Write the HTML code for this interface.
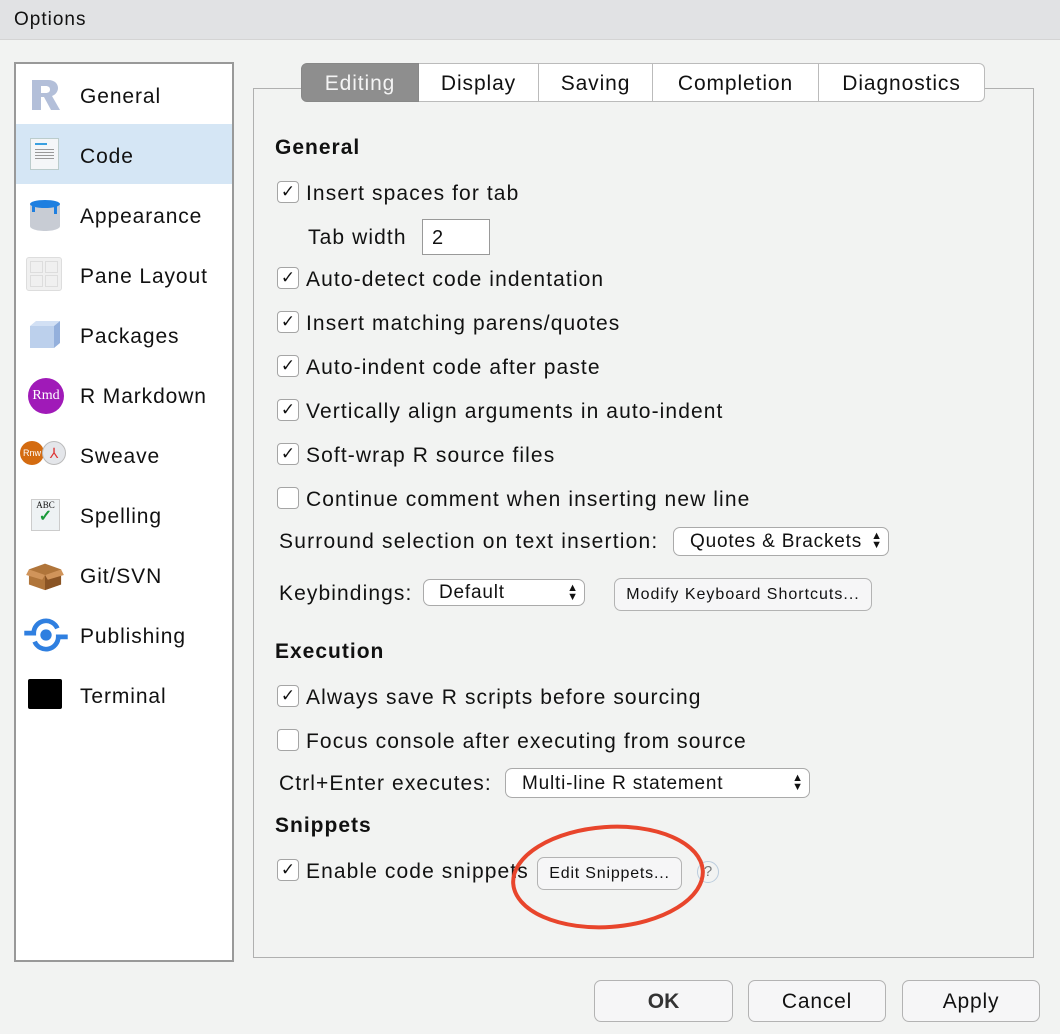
<!DOCTYPE html>
<html><head><meta charset="utf-8"><style>
*{box-sizing:border-box;margin:0;padding:0}
body{width:1060px;height:1034px;background:#f2f3f2;font-family:"Liberation Sans",sans-serif;color:#111;position:relative;overflow:hidden}
.a{position:absolute;white-space:nowrap}
.t{font-size:21px;line-height:24px;letter-spacing:1.1px;margin-top:2px}
.cb{position:absolute;width:22px;height:22px;border:1.5px solid #a5a5a5;border-radius:4px;background:#fff;font-size:17px;line-height:19px;text-align:center;color:#111;letter-spacing:0}
.nav{position:absolute;left:0;width:216px;height:60px}
.nav span{position:absolute;left:64px;top:21px;font-size:21px;line-height:24px;letter-spacing:0.9px}
.ic{position:absolute;left:12px;top:14px;width:34px;height:34px}
.tab{position:absolute;top:63px;height:39px;background:#fff;border:1.5px solid #bbb;border-left:none;font-size:21px;line-height:40px;text-align:center;letter-spacing:0.9px}
.sel{border:1.5px solid #aaa;border-radius:7px;background:#fff;font-size:19px;line-height:26px;position:absolute;letter-spacing:0.8px}
.btn{position:absolute;border:1.5px solid #b3b3b3;border-radius:7px;background:#f6f6f7;text-align:center}
.arr{position:absolute;right:6px;top:4px;font-size:11px;line-height:9px;letter-spacing:0}
</style></head><body>
<div class="a" style="left:0;top:0;width:1060px;height:40px;background:#e1e2e4;border-bottom:1px solid #d4d4d4"></div>
<div class="a" style="left:14px;top:9px;font-size:19px;letter-spacing:1px">Options</div>

<div class="a" style="left:14px;top:62px;width:220px;height:900px;background:#fff;border:2px solid #999">
 <div class="nav" style="top:0"><svg class="ic" viewBox="0 0 34 34"><path d="M4 2h16c7 0 10 4 10 8s-3 7-6 8l8 14h-9l-7-13h-3v13H4z M13 8v7h5c2 0 4-1 4-3.5S20 8 18 8z" fill="#b3bfd9" fill-rule="evenodd"/></svg><span>General</span></div>
 <div class="nav" style="top:60px;background:#d5e6f5"><div class="ic" style="left:14px;width:29px;height:32px;background:#f4f6f8;border:1px solid #bcc"><div style="margin:4px 4px;height:2px;width:12px;background:#3aa0e0"></div><div style="margin:2px 4px;height:12px;background:repeating-linear-gradient(#999 0 1px,transparent 1px 3px)"></div></div><span>Code</span></div>
 <div class="nav" style="top:120px"><svg class="ic" viewBox="0 0 34 34"><path d="M2 6v22c0 3 7 5 15 5s15-2 15-5V6z" fill="#c8ccd4"/><ellipse cx="17" cy="6" rx="15" ry="4" fill="#1e7fe0"/><path d="M4 8v6h3v-5zM26 8v8h3V8z" fill="#1e7fe0"/></svg><span>Appearance</span></div>
 <div class="nav" style="top:180px"><div class="ic" style="left:10px;top:13px;width:36px;height:34px;background:#f0f0f0;border:1px solid #ddd;border-radius:3px;display:grid;grid-template-columns:1fr 1fr;gap:2px;padding:3px"><i style="border:1px solid #ddd"></i><i style="border:1px solid #ddd"></i><i style="border:1px solid #ddd"></i><i style="border:1px solid #ddd"></i></div><span>Pane Layout</span></div>
 <div class="nav" style="top:240px"><svg class="ic" viewBox="0 0 34 34"><path d="M2 8h24v22H2z" fill="#bcd0ec"/><path d="M2 8l6-5h24l-6 5z" fill="#d2e0f4"/><path d="M26 8l6-5v22l-6 5z" fill="#94b0dc"/></svg><span>Packages</span></div>
 <div class="nav" style="top:300px"><div class="ic" style="left:12px;width:36px;height:36px;border-radius:50%;background:#a01ab8;color:#fff;font:14px 'Liberation Serif',serif;line-height:36px;text-align:center">Rmd</div><span>R Markdown</span></div>
 <div class="nav" style="top:360px"><div class="ic" style="left:4px;top:17px;width:24px;height:24px;border-radius:50%;background:#d46b10;color:#fff;font-size:9px;line-height:24px;text-align:center">Rnw</div><div class="ic" style="left:26px;top:17px;width:24px;height:24px;border-radius:50%;background:#e4e6ea;border:1px solid #bbb;color:#d33;font-size:14px;line-height:22px;text-align:center">⅄</div><span>Sweave</span></div>
 <div class="nav" style="top:420px"><div class="ic" style="left:15px;top:15px;width:29px;height:32px;background:#eef2f4;border:1px solid #ccc;font:9px 'Liberation Serif',serif;text-align:center;line-height:11px">ABC<br><b style="color:#1a9a3a;font-size:16px">✓</b></div><span>Spelling</span></div>
 <div class="nav" style="top:480px"><svg class="ic" viewBox="0 0 42 36" style="left:8px;width:42px"><path d="M4 12l17-6 17 6v16l-17 6-17-6z" fill="#b0753a"/><path d="M21 18v16l17-6V12z" fill="#8a5424"/><path d="M4 12l-3 6 17 5 3-5zM38 12l3 6-17 5-3-5z" fill="#d0945a"/></svg><span>Git/SVN</span></div>
 <div class="nav" style="top:540px"><svg class="ic" viewBox="0 0 48 36" style="left:6px;width:48px"><circle cx="24" cy="18" r="6" fill="#2f7fe0"/><path d="M1 16h10a13 13 0 0 1 25-5M47 20H37a13 13 0 0 1-25 5" fill="none" stroke="#2f7fe0" stroke-width="5"/></svg><span>Publishing</span></div>
 <div class="nav" style="top:600px"><div class="ic" style="left:12px;top:15px;width:34px;height:30px;background:#000;border-radius:2px"></div><span>Terminal</span></div>
</div>

<div class="a" style="left:253px;top:88px;width:781px;height:870px;border:1.5px solid #b0b0b0"></div>
<div class="tab" style="left:301px;width:118px;background:#8e8e8e;color:#f4f4f4;border:1.5px solid #888;border-radius:6px 0 0 6px">Editing</div>
<div class="tab" style="left:419px;width:120px">Display</div>
<div class="tab" style="left:539px;width:114px">Saving</div>
<div class="tab" style="left:653px;width:166px">Completion</div>
<div class="tab" style="left:819px;width:166px;border-radius:0 6px 6px 0">Diagnostics</div>

<div class="a t" style="left:275px;top:134px;font-weight:bold;letter-spacing:1px">General</div>
<div class="cb" style="left:277px;top:181px">✓</div><div class="a t" style="left:306px;top:180px">Insert spaces for tab</div>
<div class="a t" style="left:308px;top:224px">Tab width</div>
<div class="a" style="left:422px;top:219px;width:68px;height:36px;background:#fff;border:1.5px solid #999;font-size:20px;padding:7px 9px">2</div>
<div class="cb" style="left:277px;top:267px">✓</div><div class="a t" style="left:306px;top:266px">Auto-detect code indentation</div>
<div class="cb" style="left:277px;top:311px">✓</div><div class="a t" style="left:306px;top:310px">Insert matching parens/quotes</div>
<div class="cb" style="left:277px;top:355px">✓</div><div class="a t" style="left:306px;top:354px">Auto-indent code after paste</div>
<div class="cb" style="left:277px;top:399px">✓</div><div class="a t" style="left:306px;top:398px">Vertically align arguments in auto-indent</div>
<div class="cb" style="left:277px;top:443px">✓</div><div class="a t" style="left:306px;top:442px">Soft-wrap R source files</div>
<div class="cb" style="left:277px;top:487px"></div><div class="a t" style="left:306px;top:486px">Continue comment when inserting new line</div>
<div class="a t" style="left:279px;top:528px;letter-spacing:1.2px">Surround selection on text insertion:</div>
<div class="sel" style="left:673px;top:527px;width:216px;height:29px;padding:1px 16px">Quotes &amp; Brackets<div class="arr">▲<br>▼</div></div>
<div class="a t" style="left:279px;top:580px">Keybindings:</div>
<div class="sel" style="left:423px;top:579px;width:162px;height:27px;padding:0 15px">Default<div class="arr">▲<br>▼</div></div>
<div class="btn" style="left:614px;top:578px;width:258px;height:33px;font-size:16px;line-height:31px;letter-spacing:1px">Modify Keyboard Shortcuts...</div>

<div class="a t" style="left:275px;top:638px;font-weight:bold;letter-spacing:1px">Execution</div>
<div class="cb" style="left:277px;top:685px">✓</div><div class="a t" style="left:306px;top:684px">Always save R scripts before sourcing</div>
<div class="cb" style="left:277px;top:729px"></div><div class="a t" style="left:306px;top:728px">Focus console after executing from source</div>
<div class="a t" style="left:279px;top:770px">Ctrl+Enter executes:</div>
<div class="sel" style="left:505px;top:768px;width:305px;height:30px;padding:2px 16px">Multi-line R statement<div class="arr" style="top:5px">▲<br>▼</div></div>

<div class="a t" style="left:275px;top:812px;font-weight:bold;letter-spacing:1px">Snippets</div>
<div class="cb" style="left:277px;top:859px">✓</div><div class="a t" style="left:306px;top:858px">Enable code snippets</div>
<div class="btn" style="left:537px;top:857px;width:145px;height:33px;font-size:16px;line-height:31px;letter-spacing:0.8px">Edit Snippets...</div>
<div class="a" style="left:697px;top:861px;width:22px;height:22px;border-radius:50%;border:1.5px solid #bcd;color:#777;font-size:15px;line-height:19px;text-align:center">?</div>
<svg class="a" style="left:505px;top:820px" width="210" height="115"><ellipse cx="103" cy="57" rx="95" ry="50" fill="none" stroke="#e8452c" stroke-width="4" transform="rotate(-4 103 57)"/></svg>

<div class="btn" style="left:594px;top:980px;width:139px;height:42px;font-size:21px;line-height:41px;font-weight:bold;color:#333">OK</div>
<div class="btn" style="left:748px;top:980px;width:138px;height:42px;font-size:21px;line-height:41px;letter-spacing:0.8px">Cancel</div>
<div class="btn" style="left:902px;top:980px;width:138px;height:42px;font-size:21px;line-height:41px;letter-spacing:0.8px">Apply</div>
</body></html>
